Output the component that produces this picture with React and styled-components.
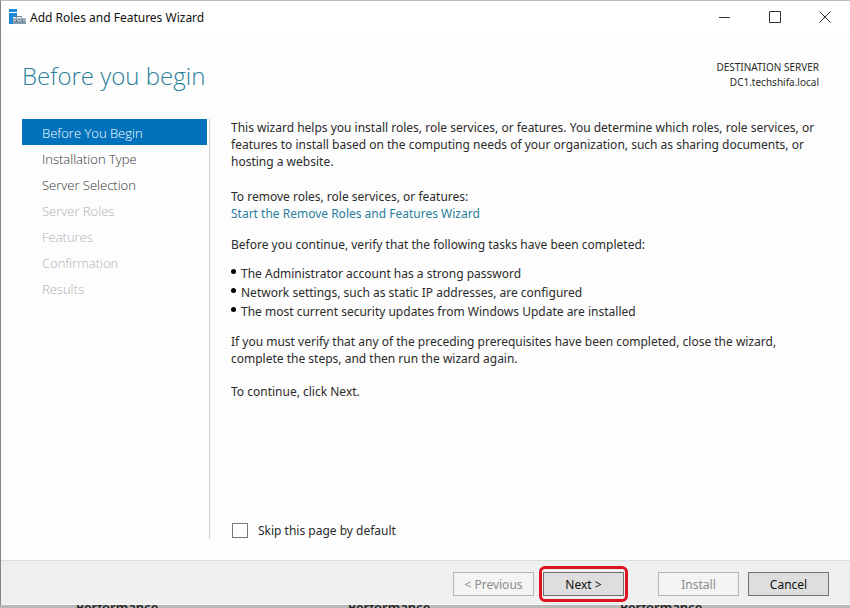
import React from 'react'
import styled, { createGlobalStyle } from 'styled-components'

const GlobalStyle = createGlobalStyle`
  * {
    box-sizing: border-box;
  }
  body {
    margin: 0;
    background: #c3c3c3;
    color: #2b2b2b;
    font-family: "Segoe UI", "Noto Sans", "Open Sans", sans-serif;
    font-size: 12px;
    line-height: 17px;
  }
`

const Page = styled.div`
  min-height: 100vh;
  display: flex;
  flex-direction: column;
`

const Window = styled.div`
  flex: 1;
  display: flex;
  flex-direction: column;
  background-color: #fdfdfd;
  border-top: 1px solid #bdbdbd;
  border-left: 1px solid #858585;
`

const TitleBar = styled.header`
  height: 32px;
  display: flex;
  align-items: center;
  background-color: white;
  padding-left: 8px;
`

const WindowTitle = styled.span`
  flex: 1;
  margin-left: 4px;
  color: #111;
`

const Caption = styled.button`
  width: 50px;
  height: 32px;
  padding: 0;
  border: none;
  background: none;
  display: flex;
  align-items: center;
  justify-content: center;
`

const Heading = styled.div`
  display: flex;
  justify-content: space-between;
  height: 86px;
  padding: 25px 31px 0 21px;
`

const Title = styled.h1`
  margin: 0;
  font-family: "Segoe UI", "Open Sans", sans-serif;
  font-size: 24px;
  line-height: 36px;
  font-weight: 300;
  color: #2a7f9b;
`

const Destination = styled.div`
  font-size: 10px;
  line-height: 15px;
  padding-top: 2px;
  text-align: right;
`

const Main = styled.div`
  flex: 1;
  display: flex;
  padding: 0 29px 21px 21px;
`

const Steps = styled.nav`
  width: 188px;
  flex-shrink: 0;
  display: flex;
  flex-direction: column;
  padding-right: 2px;
  border-right: 1px solid #cfcfcf;
`

const Step = styled.button`
  height: 26px;
  padding: 2px 0 0 20px;
  border: none;
  text-align: left;
  font-family: "Segoe UI", "Open Sans", sans-serif;
  font-size: 13px;
  font-weight: 300;
  background-color: ${(props) => (props.$active ? '#0072bc' : 'transparent')};
  color: ${(props) => (props.$active ? 'white' : '#333')};
  &:disabled {
    color: #b0b0b0;
  }
`

const Content = styled.main`
  flex: 1;
  display: flex;
  flex-direction: column;
  padding-left: 21px;
`

const Text = styled.p`
  margin: 0 0 ${(props) => props.$gap}px;
`

const Link = styled.a`
  color: #2a7f9b;
  text-decoration: none;
`

const Tasks = styled.ul`
  margin: 0 0 12px;
  padding: 0;
  list-style: none;
`

const Task = styled.li`
  display: flex;
  gap: 5px;
  line-height: 19px;
  &::before {
    content: "";
    width: 5px;
    height: 5px;
    margin-top: 5px;
    border-radius: 50%;
    background-color: black;
  }
`

const Skip = styled.label`
  display: flex;
  align-items: center;
  gap: 10px;
  margin-top: auto;
`

const Checkbox = styled.input`
  appearance: none;
  width: 16px;
  height: 15px;
  margin: 0 0 0 1px;
  border: 1px solid #777;
  background-color: white;
  &:checked {
    background-color: #0072bc;
  }
`

const Footer = styled.footer`
  display: flex;
  justify-content: flex-end;
  align-items: center;
  height: 45px;
  padding: 3px 21px 0 0;
  background-color: #efefef;
  border-top: 1px solid #dcdcdc;
  border-bottom: 1px solid #fafafa;
`

const Button = styled.button`
  display: block;
  width: 81px;
  height: 24px;
  padding: 0;
  border: 1px solid #707070;
  background-color: #dedede;
  color: #111;
  font-family: inherit;
  font-size: 12px;
  &:disabled {
    border-color: #b5b5b5;
    background-color: #f4f4f4;
    color: #8c8c8c;
  }
`

const Highlight = styled.div`
  margin: 0 30px 0 5px;
  padding: 3px 1px;
  border: 3px solid #d9141e;
  border-radius: 6px;
`

const Gap = styled.div`
  width: 9px;
`

const Behind = styled.div`
  height: 3px;
  flex-shrink: 0;
  display: grid;
  grid-template-columns: repeat(3, 272px);
  overflow: hidden;
  background-color: #b9b9b9;
  color: #222;
  font-size: 13px;
  font-weight: 600;
  line-height: 5px;
`

const Tile = styled.span`
  padding-left: 76px;
`

const steps = [
  { name: 'Before You Begin', active: true },
  { name: 'Installation Type' },
  { name: 'Server Selection' },
  { name: 'Server Roles', disabled: true },
  { name: 'Features', disabled: true },
  { name: 'Confirmation', disabled: true },
  { name: 'Results', disabled: true },
]

const ServerIcon = () => (
  <svg width="17" height="16" viewBox="0 0 17 16" aria-hidden="true">
    <path d="M0 0h8v3H0zM0 4h8v4H4v7H0z" fill="#1e8ad6" />
    <path d="M7.500 9V7.500h5V9" fill="none" stroke="#71818e" />
    <path d="M4 9h13v6H4z" fill="#8298ab" />
    <path d="M4 9.500h13" stroke="#a9bac8" />
    <path d="M4 11.500h13" stroke="#b9c7d2" />
    <path d="M7 11h1v2H7zM13 11h1v2h-1z" fill="#5f7485" />
  </svg>
)

const App = () => {
  return (
    <Page>
      <GlobalStyle />
      <Window>
        <TitleBar>
          <ServerIcon />
          <WindowTitle>Add Roles and Features Wizard</WindowTitle>
          <Caption aria-label="Minimize">
            <svg width="12" height="12"><path d="M0 6.500h11" stroke="#333" /></svg>
          </Caption>
          <Caption aria-label="Maximize">
            <svg width="12" height="12"><path d="M.5.5h11v11H.5z" fill="none" stroke="#333" /></svg>
          </Caption>
          <Caption aria-label="Close">
            <svg width="12" height="12"><path d="M.5.5l11 11M11.500.5l-11 11" stroke="#333" /></svg>
          </Caption>
        </TitleBar>
        <Heading>
          <Title>Before you begin</Title>
          <Destination>
            DESTINATION SERVER
            <br />
            DC1.techshifa.local
          </Destination>
        </Heading>
        <Main>
          <Steps>
            {steps.map((step) => (
              <Step key={step.name} $active={step.active} disabled={step.disabled}>
                {step.name}
              </Step>
            ))}
          </Steps>
          <Content>
            <Text $gap={18}>
              This wizard helps you install roles, role services, or features. You determine which roles, role services, or
              features to install based on the computing needs of your organization, such as sharing documents, or
              hosting a website.
            </Text>
            <Text $gap={14}>
              To remove roles, role services, or features:
              <br />
              <Link href="#remove">Start the Remove Roles and Features Wizard</Link>
            </Text>
            <Text $gap={11}>Before you continue, verify that the following tasks have been completed:</Text>
            <Tasks>
              <Task>The Administrator account has a strong password</Task>
              <Task>Network settings, such as static IP addresses, are configured</Task>
              <Task>The most current security updates from Windows Update are installed</Task>
            </Tasks>
            <Text $gap={16}>
              If you must verify that any of the preceding prerequisites have been completed, close the wizard,
              complete the steps, and then run the wizard again.
            </Text>
            <Text $gap={0}>To continue, click Next.</Text>
            <Skip>
              <Checkbox type="checkbox" />
              Skip this page by default
            </Skip>
          </Content>
        </Main>
        <Footer>
          <Button disabled>&lt; Previous</Button>
          <Highlight>
            <Button>Next &gt;</Button>
          </Highlight>
          <Button disabled>Install</Button>
          <Gap />
          <Button>Cancel</Button>
        </Footer>
      </Window>
      <Behind>
        <Tile>Performance</Tile>
        <Tile>Performance</Tile>
        <Tile>Performance</Tile>
      </Behind>
    </Page>
  )
}

export default App
